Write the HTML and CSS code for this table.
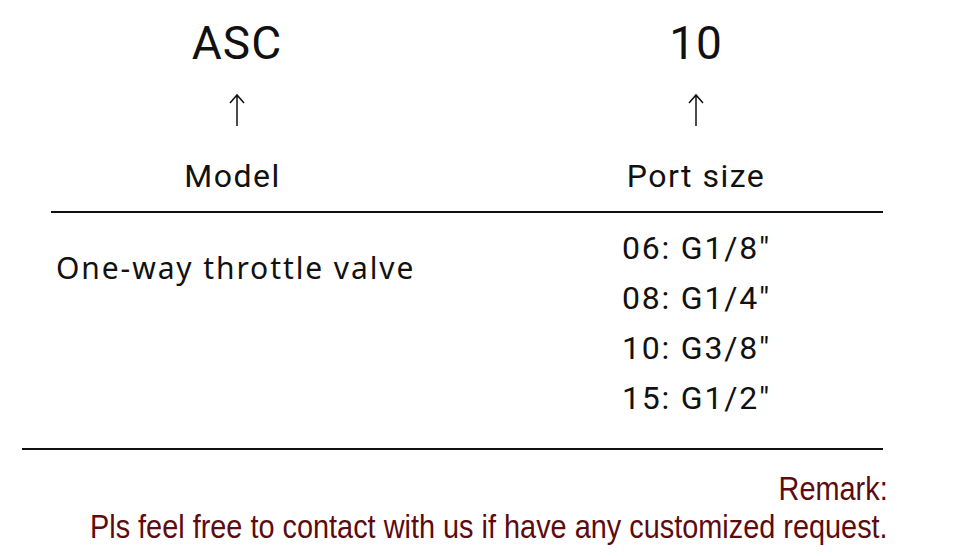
FILE: index.html
```html
<!DOCTYPE html>
<html lang="en">
<head>
<meta charset="utf-8">
<title>ASC model code</title>
<link rel="stylesheet" href="styles.css">
</head>
<body>
<div class="page">
  <div class="code">
    <div class="col">
      <div class="part">ASC</div>
      <svg class="arrow" width="16" height="34" viewBox="0 0 16 34"><path d="M8 2V33M1 10L8 2L15 10" fill="none" stroke="#111" stroke-width="1.5"/></svg>
      <div class="label label-model">Model</div>
    </div>
    <div class="col">
      <div class="part">10</div>
      <svg class="arrow" width="16" height="34" viewBox="0 0 16 34"><path d="M8 2V33M1 10L8 2L15 10" fill="none" stroke="#111" stroke-width="1.5"/></svg>
      <div class="label">Port size</div>
    </div>
  </div>
  <div class="rule rule-top"></div>
  <div class="details">
    <div class="desc">One-way throttle valve</div>
    <ul class="sizes">
      <li>06: G1/8″</li>
      <li>08: G1/4″</li>
      <li>10: G3/8″</li>
      <li>15: G1/2″</li>
    </ul>
  </div>
  <div class="rule rule-bottom"></div>
  <div class="remark">
    <p class="remark-line"><span>Remark:</span></p>
    <p class="remark-line"><span>Pls feel free to contact with us if have any customized request.</span></p>
  </div>
</div>
</body>
</html>
```
FILE: styles.css
```css
html, body {
  margin: 0;
  padding: 0;
  background: #fff;
}
body {
  font-family: Roboto, "Liberation Sans", sans-serif;
  color: #111;
}
.page {
  width: 954px;
  height: 556px;
  overflow: hidden;
}
.code {
  display: grid;
  grid-template-columns: 372px 374px;
  column-gap: 86px;
  margin-left: 51px;
  padding-top: 16px;
}
.col {
  display: flex;
  flex-direction: column;
  align-items: center;
}
.part {
  font-size: 46px;
  line-height: 54px;
  letter-spacing: 1px;
}
.arrow {
  display: block;
  margin-top: 23px;
}
.label {
  font-size: 32px;
  line-height: 36px;
  letter-spacing: 1.5px;
  margin-top: 31px;
}
.label-model {
  margin-right: 9px;
}
.rule {
  height: 2px;
  background: #111;
}
.rule-top {
  margin: 17px 0 0 51px;
  width: 832px;
}
.details {
  display: flex;
  height: 235px;
}
.desc {
  font-family: "Noto Sans", "Open Sans", sans-serif;
  font-size: 30px;
  letter-spacing: 1.9px;
  margin: 34px 0 0 56px;
  width: 566px;
}
.sizes {
  list-style: none;
  margin: 10px 0 0 0;
  padding: 0;
  font-size: 32px;
  line-height: 50px;
  letter-spacing: 1.8px;
}
.rule-bottom {
  margin-left: 22px;
  width: 861px;
}
.remark {
  width: 888px;
  color: #5c0b0e;
  font-family: "Liberation Sans", Arial, sans-serif;
  font-size: 33px;
  padding-top: 20px;
}
.remark-line {
  margin: 0;
  display: flex;
  justify-content: flex-end;
  line-height: 38px;
  white-space: nowrap;
}
.remark-line span {
  display: block;
  flex: none;
  transform: scaleX(0.875);
  transform-origin: right center;
}
```
